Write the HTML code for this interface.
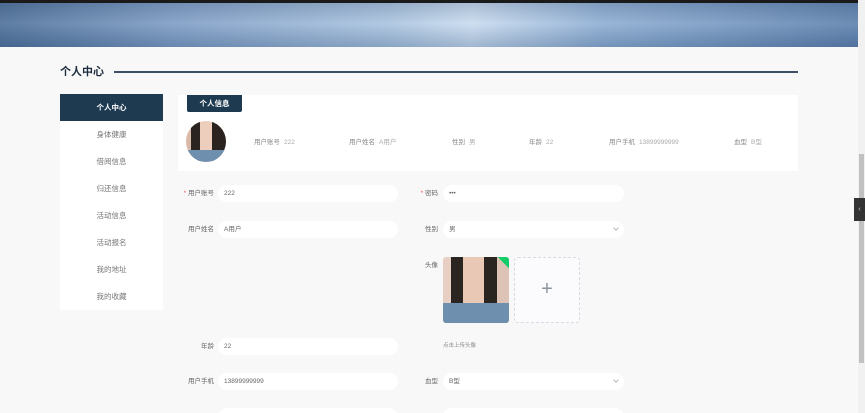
<!DOCTYPE html>
<html><head><meta charset="utf-8">
<style>
*{margin:0;padding:0;box-sizing:border-box}
html,body{width:865px;height:413px;overflow:hidden}
body{background:#f8f8f9;font-family:"Liberation Sans","Noto Sans CJK SC",sans-serif;position:relative;color:#666}
.a{position:absolute}
.banner{left:0;top:0;width:858px;height:47px;background:linear-gradient(90deg,#4d6f99 0%,#7d9cc4 20%,#a9c3df 45%,#c9dbef 55%,#8eaed3 70%,#5d80ad 100%)}
.banner:after{content:"";position:absolute;left:0;right:0;top:0;height:47px;background:linear-gradient(180deg,rgba(60,80,110,.25),rgba(255,255,255,.1) 50%,rgba(40,70,110,.25))}
.topbar{left:0;top:0;width:865px;height:3px;background:#1a1a1a}
.title{left:60px;top:64px;font-size:11px;font-weight:bold;color:#1e2d3d;line-height:16px}
.line{left:114px;top:71px;width:684px;height:2px;background:#3d5063}
.side{left:60px;top:94px;width:103px;height:216px;background:#fff}
.item{position:absolute;left:0;width:103px;height:27px;line-height:27px;text-align:center;font-size:7.5px;color:#777}
.act{background:#1e3a50;color:#fff;font-weight:bold;top:0}
.card{left:178px;top:95px;width:620px;height:76px;background:#fff}
.tab{left:187px;top:95px;width:55px;height:17px;background:#1e3a50;color:#fff;font-size:7.5px;font-weight:bold;text-align:center;line-height:17px;border-radius:0 0 2px 2px}
.av{left:186px;top:121px;width:40px;height:41px;border-radius:50%;overflow:hidden;background:linear-gradient(90deg,#d9b9a8 0 12%,#2b2320 12% 35%,#edcdbb 35% 65%,#2b2320 65%)}
.lab{font-size:6.5px;color:#888;top:138px;line-height:9px}
.lab span{color:#aaa;margin-left:4px}
.fl{font-size:6.5px;color:#666;text-align:right;width:60px;height:17px;line-height:17px}
.in{height:17px;border-radius:9px;background:#fff;font-size:6.5px;color:#666;line-height:17px;padding-left:6px}
.red{color:#e55}
.chev{position:absolute;right:6px;top:5px;width:4px;height:4px;border-right:1px solid #bbb;border-bottom:1px solid #bbb;transform:rotate(45deg)}
.sb{left:858px;top:0;width:7px;height:413px;background:#f1f1f1}
.thumb{left:859px;top:154px;width:5px;height:209px;background:#c1c1c1}
.tog{left:854px;top:198px;width:11px;height:23px;background:#333;color:#ccc;font-size:7px;text-align:center;line-height:23px}
</style></head><body>
<div class="a banner"></div>
<div class="a topbar"></div>
<div class="a title">个人中心</div>
<div class="a line"></div>
<div class="a side">
<div class="item act">个人中心</div>
<div class="item" style="top:27px">身体健康</div>
<div class="item" style="top:54px">借阅信息</div>
<div class="item" style="top:81px">归还信息</div>
<div class="item" style="top:108px">活动信息</div>
<div class="item" style="top:135px">活动报名</div>
<div class="item" style="top:162px">我的地址</div>
<div class="item" style="top:189px">我的收藏</div>
</div>
<div class="a card"></div>
<div class="a tab">个人信息</div>
<div class="a av"><div style="position:absolute;left:0;bottom:0;width:40px;height:12px;background:#6e8fae"></div></div>
<div class="a lab" style="left:254px">用户账号<span>222</span></div>
<div class="a lab" style="left:349px">用户姓名<span>A用户</span></div>
<div class="a lab" style="left:452px">性别<span>男</span></div>
<div class="a lab" style="left:529px">年龄<span>22</span></div>
<div class="a lab" style="left:609px">用户手机<span>13899999999</span></div>
<div class="a lab" style="left:734px">血型<span>B型</span></div>

<div class="a fl" style="left:154px;top:185px"><span class="red">* </span>用户账号</div>
<div class="a in" style="left:218px;top:185px;width:180px">222</div>
<div class="a fl" style="left:378px;top:185px"><span class="red">* </span>密码</div>
<div class="a in" style="left:443px;top:185px;width:181px">•••</div>

<div class="a fl" style="left:154px;top:221px">用户姓名</div>
<div class="a in" style="left:218px;top:221px;width:180px">A用户</div>
<div class="a fl" style="left:378px;top:221px">性别</div>
<div class="a in" style="left:443px;top:221px;width:181px">男<i class="chev"></i></div>

<div class="a fl" style="left:378px;top:257px">头像</div>
<div class="a" style="left:443px;top:257px;width:66px;height:66px;border-radius:3px;background:linear-gradient(90deg,#e8cfc3 0 12%,#2b2522 12% 30%,#e9c8b5 30% 62%,#2b2522 62% 82%,#dcc3b5 82%);overflow:hidden"><div style="position:absolute;left:0;bottom:0;width:66px;height:20px;background:#6e8fae"></div><div style="position:absolute;right:-8px;top:-8px;width:16px;height:16px;background:#13ce66;transform:rotate(45deg)"></div></div>
<div class="a" style="left:514px;top:257px;width:66px;height:66px;border:1px dashed #d9d9e0;border-radius:4px;background:#fbfbfd;text-align:center;line-height:62px;font-size:20px;color:#8c939d;font-weight:200">+</div>

<div class="a fl" style="left:154px;top:338px">年龄</div>
<div class="a in" style="left:218px;top:338px;width:180px">22</div>
<div class="a" style="left:443px;top:342px;font-size:5.5px;color:#888;line-height:9px">点击上传头像</div>

<div class="a fl" style="left:154px;top:373px">用户手机</div>
<div class="a in" style="left:218px;top:373px;width:180px">13899999999</div>
<div class="a fl" style="left:378px;top:373px">血型</div>
<div class="a in" style="left:443px;top:373px;width:181px">B型<i class="chev"></i></div>

<div class="a in" style="left:218px;top:408px;width:180px"></div>
<div class="a in" style="left:443px;top:408px;width:181px"></div>

<div class="a sb"></div>
<div class="a thumb"></div>
<div class="a tog">‹</div>
</body></html>
